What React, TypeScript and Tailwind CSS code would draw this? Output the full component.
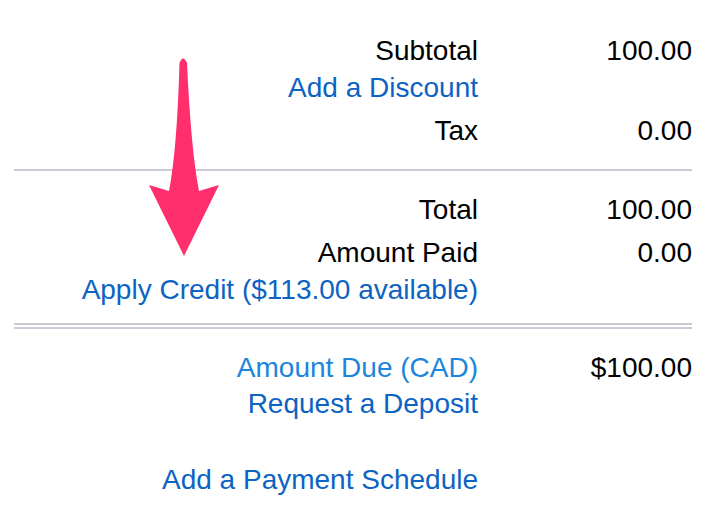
import React from 'react';

interface RowProps {
  label: string;
  value?: string;
  tone?: 'plain' | 'link' | 'light';
  className?: string;
}

function Row({ label, value, tone = 'plain', className = '' }: RowProps) {
  const color =
    tone === 'link' ? 'text-[#0c63c3]' : tone === 'light' ? 'text-[#1b86db]' : 'text-black';
  return (
    <div className={`flex leading-[36px] ${className}`}>
      <div className={`w-[464px] text-right whitespace-nowrap ${color}`}>{label}</div>
      <div className="flex-1 text-right text-black">{value}</div>
    </div>
  );
}

function Arrow() {
  return (
    <svg
      className="absolute left-0 top-0 pointer-events-none"
      width="718"
      height="528"
      viewBox="0 0 718 528"
    >
      <path
        d="M179.5 63 Q183 54 187 63 Q191 150 199 191 L219 185 L184 256 L149 185 L169 191 Q177 150 179.5 63 Z"
        fill="#ff2f6d"
      />
    </svg>
  );
}

export default function App() {
  return (
    <div
      className="relative w-[718px] h-[528px] bg-white overflow-hidden pl-[14px] pr-[26px] pt-[33px] text-[28px]"
      style={{ fontFamily: '"Liberation Sans", Arial, sans-serif' }}
    >
      {/* Subtotal block */}
      <Row label="Subtotal" value="100.00" />
      <Row label="Add a Discount" tone="link" className="mt-px" />
      <Row label="Tax" value="0.00" className="mt-[7px]" />
      <div className="mt-[20px] h-[2px] bg-[#c9ccd6]" />

      {/* Total block */}
      <Row label="Total" value="100.00" className="mt-[21px]" />
      <Row label="Amount Paid" value="0.00" className="mt-[7px]" />
      <Row label="Apply Credit ($113.00 available)" tone="link" className="mt-px" />
      <div className="mt-[15px] h-[2px] bg-[#c9ccd6]" />
      <div className="mt-[2px] h-[2px] bg-[#c9ccd6]" />

      {/* Due block */}
      <Row label="Amount Due (CAD)" value="$100.00" tone="light" className="mt-[21px]" />
      <Row label="Request a Deposit" tone="link" />
      <Row label="Add a Payment Schedule" tone="link" className="mt-[40px]" />

      <Arrow />
    </div>
  );
}
